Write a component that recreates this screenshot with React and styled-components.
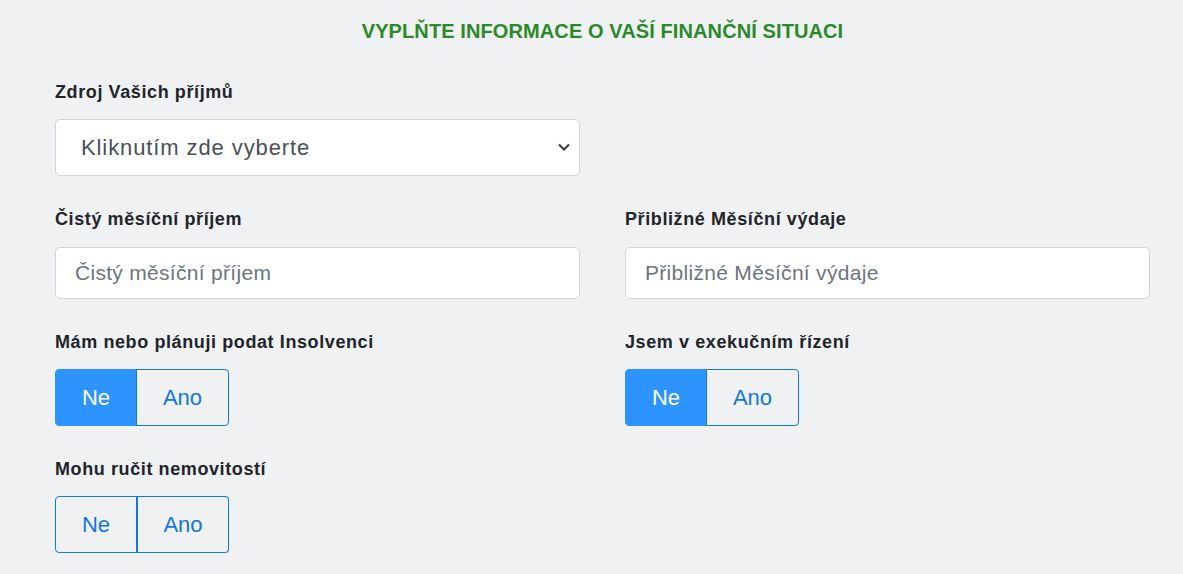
import React, { useState } from "react";
import styled, { createGlobalStyle } from "styled-components";

const Global = createGlobalStyle`
  html, body { margin: 0; padding: 0; background: #f0f1f3; }
  body { font-family: "Liberation Sans", Arial, sans-serif; color: #212529; }
  * { box-sizing: border-box; }
`;

const Page = styled.div`
  padding: 17px 0 0 55px;
`;

const Title = styled.h2`
  margin: 0 0 36px;
  width: 1095px;
  text-align: center;
  font-family: "Liberation Sans", Arial, sans-serif;
  font-weight: 700;
  font-size: 20px;
  line-height: 28px;
  color: #2a8a2a;
  letter-spacing: 0.1px;
  text-transform: uppercase;
`;

const Row = styled.div`
  display: grid;
  grid-template-columns: 525px 525px;
  column-gap: 45px;
  margin-bottom: ${(p) => p.$mb || 0}px;
`;

const Col = styled.div``;

const Label = styled.label`
  display: block;
  font-size: 18px;
  font-weight: 700;
  line-height: 22px;
  letter-spacing: 0.6px;
  margin-bottom: ${(p) => p.$mb || 16}px;
  color: #212529;
`;

const SelectWrap = styled.div`
  position: relative;
`;

const Select = styled.select`
  appearance: none;
  width: 100%;
  height: 57px;
  padding: 0 40px 0 25px;
  font-family: "Liberation Sans", Arial, sans-serif;
  font-size: 22px;
  letter-spacing: 0.9px;
  color: #495057;
  background: #fff;
  border: 1px solid #d2d4d8;
  border-radius: 5px;
  outline: none;
`;

const Chevron = styled.svg`
  position: absolute;
  right: 9px;
  top: 23px;
  pointer-events: none;
`;

const Input = styled.input`
  width: 100%;
  height: 52px;
  padding: 0 19px;
  font-family: "Liberation Sans", Arial, sans-serif;
  font-size: 21px;
  letter-spacing: 0.3px;
  color: #495057;
  background: #fff;
  border: 1px solid #d2d4d8;
  border-radius: 5px;
  outline: none;
  &::placeholder { color: #6c757d; opacity: 1; }
`;

const Group = styled.div`
  display: inline-flex;
`;

const Toggle = styled.button`
  height: 57px;
  width: ${(p) => p.$w}px;
  font-family: "Liberation Sans", Arial, sans-serif;
  font-size: 22px;
  color: ${(p) => (p.$active ? "#fff" : "#1277e0")};
  background: ${(p) => (p.$active ? "#2d93ff" : "transparent")};
  border: 1px solid ${(p) => (p.$active ? "#2d93ff" : "#1277e0")};
  padding: 0;
  cursor: pointer;
  &:first-child {
    border-radius: 4px 0 0 4px;
  }
  &:last-child {
    border-radius: 0 4px 4px 0;
    margin-left: -1px;
    border-left-width: ${(p) => (p.$split ? 2 : 1)}px;
  }
`;

function YesNo({ value, onChange }) {
  return (
    <Group>
      <Toggle $w={82} $active={value === "ne"} onClick={() => onChange("ne")}>Ne</Toggle>
      <Toggle $w={93} $active={value === "ano"} $split={value === null} onClick={() => onChange("ano")}>Ano</Toggle>
    </Group>
  );
}

export default function App() {
  const [ins, setIns] = useState("ne");
  const [exe, setExe] = useState("ne");
  const [nem, setNem] = useState(null);
  return (
    <Page>
      <Global />
      <Title>Vyplňte informace o Vaší finanční situaci</Title>
      <Row $mb={32}>
        <Col>
          <Label>Zdroj Vašich příjmů</Label>
          <SelectWrap>
            <Select defaultValue="">
              <option value="">Kliknutím zde vyberte</option>
            </Select>
            <Chevron width="14" height="10" viewBox="0 0 14 10">
              <path d="M2 2.5l5 5 5-5" fill="none" stroke="#343a40" strokeWidth="2" />
            </Chevron>
          </SelectWrap>
        </Col>
      </Row>
      <Row $mb={32}>
        <Col>
          <Label $mb={17}>Čistý měsíční příjem</Label>
          <Input placeholder="Čistý měsíční příjem" />
        </Col>
        <Col>
          <Label $mb={17}>Přibližné Měsíční výdaje</Label>
          <Input placeholder="Přibližné Měsíční výdaje" />
        </Col>
      </Row>
      <Row $mb={32}>
        <Col>
          <Label>Mám nebo plánuji podat Insolvenci</Label>
          <YesNo value={ins} onChange={setIns} />
        </Col>
        <Col>
          <Label>Jsem v exekučním řízení</Label>
          <YesNo value={exe} onChange={setExe} />
        </Col>
      </Row>
      <Row>
        <Col>
          <Label>Mohu ručit nemovitostí</Label>
          <YesNo value={nem} onChange={setNem} />
        </Col>
      </Row>
    </Page>
  );
}
